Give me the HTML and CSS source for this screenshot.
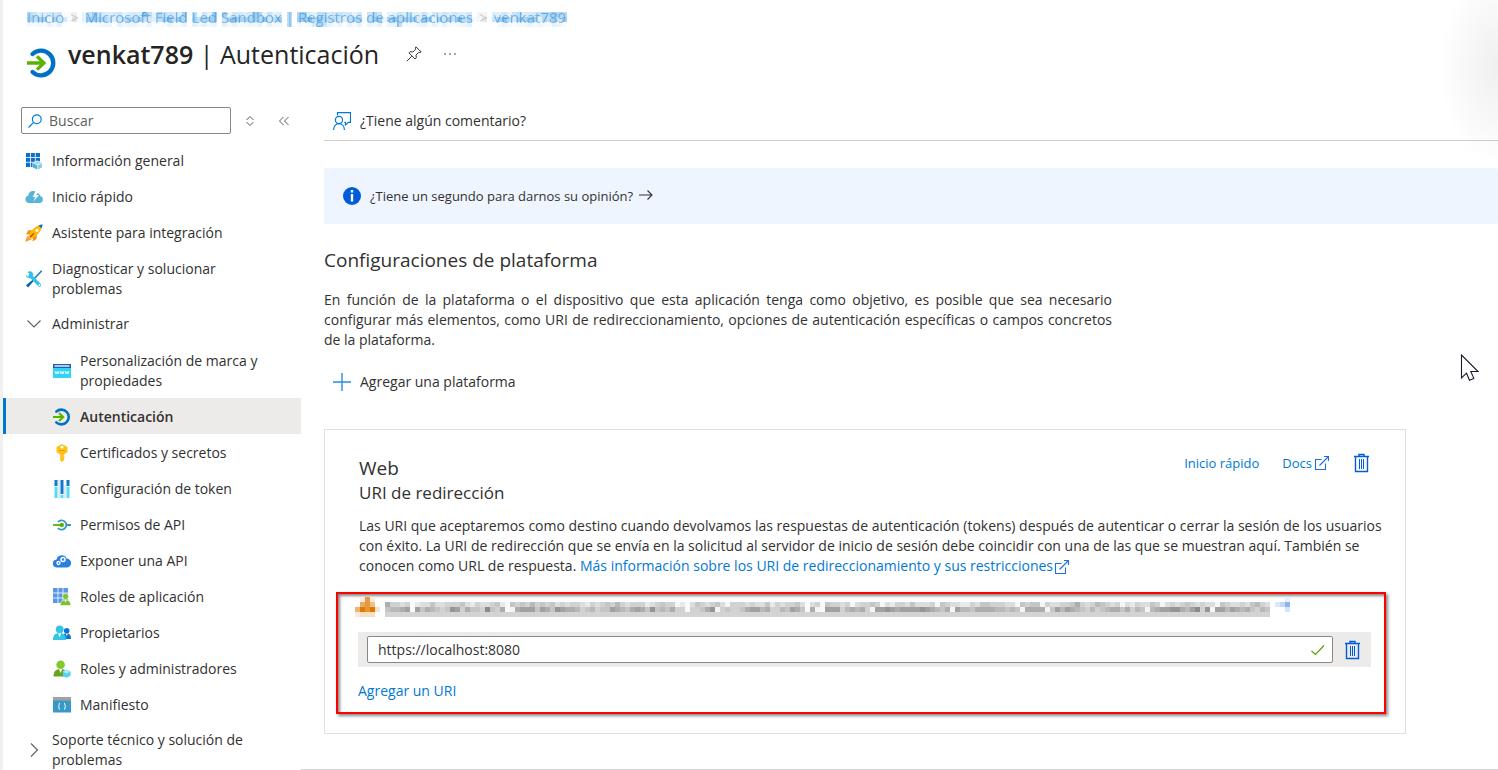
FILE: index.html
```html
<!DOCTYPE html>
<html lang="es">
<head><meta charset="utf-8"><title>venkat789 | Autenticación</title>
<link rel="stylesheet" href="styles.css">
</head>

<body>
<svg class="defs" aria-hidden="true">
 <defs>
  <!-- samples the blurred text once per 5px cell, then lays faint text over the cells -->
  <filter id="pixelate" x="0" y="0" width="100%" height="100%" color-interpolation-filters="sRGB">
   <feGaussianBlur in="SourceGraphic" stdDeviation="1.8" result="b"/>
   <feFlood x="2" y="2" width="1" height="1"/>
   <feComposite width="5" height="5"/>
   <feTile result="t"/>
   <feComposite in="b" in2="t" operator="in"/>
   <feMorphology operator="dilate" radius="2" result="m"/>
   <feGaussianBlur in="SourceGraphic" stdDeviation=".7"/>
   <feComponentTransfer result="s"><feFuncA type="linear" slope=".45"/></feComponentTransfer>
   <feMerge><feMergeNode in="m"/><feMergeNode in="s"/></feMerge>
  </filter>
  <symbol id="auth" viewBox="0 0 18 18">
   <path d="M3.3 3.6A7.4 7.4 0 1 1 3.3 14.4" fill="none" stroke="#0072c6" stroke-width="2.6" stroke-linecap="round"/>
   <path d="M0 9h9M6 5l4.2 4L6 13" fill="none" stroke="#59b400" stroke-width="2"/>
  </symbol>
  <symbol id="trash" viewBox="0 0 17 20">
   <path d="M1 3.500h15M6 3.500V1.500h5v2M2.500 3.500v15h12v-15" fill="none" stroke="#015cda" stroke-width="1.400"/>
   <path d="M6.500 6v10M8.500 6v10M10.500 6v10" stroke="#015cda"/>
  </symbol>
  <symbol id="ext" viewBox="0 0 16 16">
   <path d="M7.500 4.500H1.500v10h10V8.500M5.500 10.500 14.500 1.500M10 1.500h4.500V6" fill="none" stroke="#1b6fe0" stroke-width="1.100"/>
  </symbol>
 </defs>
</svg>

<div class="shell">
 <header>
  <nav class="crumbs" aria-label="Ruta">
   <a href="#">Inicio</a><span>&gt;</span><a href="#">Microsoft Field Led Sandbox | Registros de aplicaciones</a><span>&gt;</span><a href="#">venkat789</a>
  </nav>
  <div class="title">
   <svg class="logo"><use href="#auth"/></svg>
   <h1><b>venkat789</b> | Autenticación</h1>
   <button class="plain" aria-label="Anclar"><svg class="i16" viewBox="0 0 16 16"><path d="M10 .8l5.200 5.200-1.400 .5-1-.2-2.800 2.800.3 2.700-1.200 1.200L3 6.900l1.200-1.200 2.700.3 2.800-2.800-.2-1zM5.800 10.200.8 15.200" fill="none" stroke="#323130"/></svg></button>
   <button class="plain" aria-label="Más"><svg class="i16" viewBox="0 0 16 16"><g fill="#323130"><circle cx="3" cy="8" r=".8"/><circle cx="8" cy="8" r=".8"/><circle cx="13" cy="8" r=".8"/></g></svg></button>
  </div>
 </header>

 <div class="cols">
  <aside>
   <div class="search">
    <label class="box">
     <svg class="i16" viewBox="0 0 16 16"><path d="M1.500 14.500 6.400 9.600" stroke="#0078d4" stroke-width="1.200"/><circle cx="9.800" cy="6.200" r="4.400" fill="none" stroke="#0078d4" stroke-width="1.200"/></svg>
     <input type="text" placeholder="Buscar" aria-label="Buscar">
    </label>
    <button class="plain" aria-label="Ordenar"><svg class="i12" viewBox="0 0 12 12"><path d="M2.500 5 6 1.500 9.500 5M2.500 7 6 10.500 9.500 7" fill="none" stroke="#605e5c"/></svg></button>
    <button class="plain" aria-label="Contraer"><svg class="i12" viewBox="0 0 12 12"><path d="M5.500 2l-4 4 4 4M10.500 2l-4 4 4 4" fill="none" stroke="#605e5c"/></svg></button>
   </div>

   <nav class="menu" aria-label="Menú">
    <a href="#"><svg viewBox="0 0 18 18"><path d="M1 1h14v14H1z" fill="#0f6fc6"/><path d="M5.500 1v14M10.300 1v14M1 5.500h14M1 10.300h14" stroke="#fff" stroke-width=".8"/><path d="M12.500 8.500l5 2v5l-5 2.500-5-2.500v-5z" fill="#fff"/><path d="M12.500 9l4.500 1.800-4.500 2L8 10.800z" fill="#a7dcf0"/><path d="M8 11.300l4.200 2v4.200L8 15.500z" fill="#50b0d8"/><path d="M17 11.300l-4.200 2v4.200l4.200-2z" fill="#8acbe6"/></svg>Información general</a>
    <a href="#"><svg viewBox="0 0 18 18"><path d="M4 15a3.800 3.800 0 0 1-.6-7.500A5 5 0 0 1 12.600 5.300 4 4 0 0 1 15.500 8 3.600 3.600 0 0 1 14.500 15z" fill="#59b4d9"/><path d="M11 2 7.800 9h2.400L8.500 13.500 14 7h-2.700L14 2z" fill="#fff"/></svg>Inicio rápido</a>
    <a href="#"><svg viewBox="0 0 18 18"><path d="M7 6 3 6.500 1 10.500l4-.5zM12 11l-.5 4-4 2.500.5-4.500z" fill="#f78d1e"/><path d="M2.500 11.500 0 18l6.500-2.500z" fill="#ff9c2b"/><path d="M17.500.5C12 1 6.500 5 3.300 11.500l3.200 3.200C13 11.500 17 6 17.500.5z" fill="#ffb900"/><path d="M17.500.5c-1.500.1-2.600.4-4 1l3 3c.6-1.400.9-2.500 1-4z" fill="#0078d4"/><circle cx="12" cy="6.300" r="1.600" fill="#fff"/><path d="M5 13.300 9 9.200" stroke="#b4530a" stroke-width="1.300"/></svg>Asistente para integración</a>
    <a href="#"><svg viewBox="0 0 18 18"><path d="M16.700.8 8.500 9.500" stroke="#1380b8" stroke-width="1.500"/><path d="M9.300 8.500 1 15.200 3 17.400 10 9.500z" fill="#0062ad"/><path d="M5 5.500 14.500 15" stroke="#32c0ea" stroke-width="3.200" stroke-linecap="round"/><path d="M2.500 2l2.700 2.600-.6 1.700-1.800.4L.8 4.500C.8 7 2.600 8.700 5.200 8.300l3-2.700C8.700 3.200 7 1.200 4.400 1.200z" fill="#32c0ea"/><circle cx="14.500" cy="15" r=".9" fill="#fff"/></svg>Diagnosticar y solucionar problemas</a>
    <a href="#" class="group"><svg viewBox="0 0 18 18"><path d="M2.500 5.500 9 12l6.500-6.500" fill="none" stroke="#605e5c" stroke-width="1.100"/></svg>Administrar</a>
    <div class="sub">
     <a href="#"><svg viewBox="0 0 18 18"><path d="M0 2h18v14H0z" fill="#32d4f5"/><path d="M0 2h18v4H0z" fill="#1b62ab"/><path d="M1.500 3h15v2h-15z" fill="#a9c9e8"/><path d="M2 9l1 3 1-2.500L5 12l1-3M7 9l1 3 1-2.500 1 2.500 1-3M12 9l1 3 1-2.500 1 2.500 1-3" fill="none" stroke="#fff" stroke-width=".8"/></svg>Personalización de marca y propiedades</a>
     <a href="#" class="on"><svg><use href="#auth"/></svg>Autenticación</a>
     <a href="#"><svg viewBox="0 0 18 18"><path d="M9 0 14.500 3v5L10.700 10.800v1.400l1.300 1-1.300 1.300 1 1L9 18l-1.800-1.600V10.800L3.500 8V3z" fill="#ffc21a"/><circle cx="9" cy="3.200" r="1.400" fill="#fff"/><path d="M6 6.500h6" stroke="#ef9a00"/></svg>Certificados y secretos</a>
     <a href="#"><svg viewBox="0 0 18 18"><path d="M3 0v6M9 0v14M15 0v6" stroke="#0f78d4" stroke-width="3"/><path d="M3 7v11M15 7v11M9 15v3" stroke="#50dff5" stroke-width="3"/><path d="M6 0v18M12 5v13" stroke="#bfc6cc" stroke-width=".8"/></svg>Configuración de token</a>
     <a href="#"><svg viewBox="0 0 18 18"><path d="M5 6a4.700 4.700 0 1 1 0 6M13.500 9H18" fill="none" stroke="#3999c6" stroke-width="1.800"/><path d="M0 9h8" stroke="#59b400" stroke-width="1.800"/><circle cx="8.800" cy="9" r="2.200" fill="#59b400"/></svg>Permisos de API</a>
     <a href="#"><svg viewBox="0 0 18 18"><path d="M4 15.500a4 4 0 0 1-.4-8A5.300 5.300 0 0 1 13.700 6.500 4.500 4.500 0 0 1 13.500 15.500z" fill="#2a7fe0"/><circle cx="10" cy="7.500" r="2" fill="none" stroke="#fff" stroke-width="1.500"/><circle cx="5.500" cy="11" r="1.500" fill="none" stroke="#fff" stroke-width="1.300"/></svg>Exponer una API</a>
     <a href="#"><svg viewBox="0 0 18 18"><path d="M0 0h15v15H0z" fill="#5a96ee"/><path d="M5 0v15M10 0v15M0 5h15M0 10h15" stroke="#fff" stroke-width=".8"/><path d="M7.200 17.500c0-4 2-5.500 5.300-5.500s5.300 1.500 5.300 5.500z" fill="#7cc229" stroke="#fff" stroke-width=".6"/><circle cx="12.500" cy="8.500" r="3" fill="#7cc229" stroke="#fff" stroke-width=".6"/><path d="M11.500 12h2l-1 3z" fill="#fff"/></svg>Roles de aplicación</a>
     <a href="#"><svg viewBox="0 0 18 18"><path d="M9 15c0-4 1.500-5.500 4.500-5.500S18 11 18 15z" fill="#1173d0"/><circle cx="13.700" cy="6.700" r="2.800" fill="#1173d0"/><path d="M0 16c0-5 2-7 6.500-7s6.500 2 6.500 7z" fill="#32c5ea"/><circle cx="6.700" cy="5.300" r="3.900" fill="#32c5ea"/><path d="M5 9.300h3.200L6.600 13.500zM12.800 9.700h2l-1 2.600z" fill="#fff"/></svg>Propietarios</a>
     <a href="#"><svg viewBox="0 0 18 18"><path d="M.5 16.500C.5 11 3 9 7.500 9s7 2 7 7.500z" fill="#6aa31d"/><circle cx="7.600" cy="4.800" r="4.300" fill="#86c92e"/><path d="M5.900 9h3.400l-1.700 4z" fill="#fff"/><path d="M13.700 9.500l3.900 2v4.200l-3.900 2.100-3.900-2.100v-4.200z" fill="#50d5f0"/><path d="M13.700 9.500l3.900 2-3.900 2-3.900-2z" fill="#a9eefa"/></svg>Roles y administradores</a>
     <a href="#"><svg viewBox="0 0 18 18"><path d="M0 1h18v15.500H0z" fill="#3999c6"/><path d="M0 1h18v3.500H0z" fill="#a0a1a2"/><path d="M7 7c-1.500 0-.3 2.600-1.600 3.200C6.700 11 5.500 13.500 7 13.500M11 7c1.500 0 .3 2.600 1.600 3.200-1.300.8-.1 3.300-1.600 3.300" fill="none" stroke="#fff"/></svg>Manifiesto</a>
    </div>
    <a href="#"><svg viewBox="0 0 18 18"><path d="M6 2.500 12.500 9 6 15.500" fill="none" stroke="#605e5c" stroke-width="1.100"/></svg>Soporte técnico y solución de problemas</a>
   </nav>
  </aside>

  <main>
   <div class="bar">
    <button class="cmd"><svg class="i18" viewBox="0 0 18 18"><g fill="none" stroke="#0078d4" stroke-width="1.200"><path d="M4.500 3.500V.6h13v9.800h-2l-3 2.600v-2.600h-1.200"/><circle cx="6" cy="8" r="3.600"/><path d="M.6 18c0-4 2.400-6.300 5.400-6.300s5.400 2.300 5.400 6.300"/></g></svg>¿Tiene algún comentario?</button>
   </div>
   <a href="#" class="banner">
    <svg class="i18" viewBox="0 0 18 18"><circle cx="9" cy="9" r="9" fill="#015cda"/><path d="M9 3v2.400M9 7v7.500" stroke="#fff" stroke-width="2.400"/></svg>
    <span>¿Tiene un segundo para darnos su opinión?</span>
    <svg class="i14" viewBox="0 0 14 14"><path d="M0 6h13M8.500 1.500 13 6l-4.500 4.500" fill="none" stroke="#323130" stroke-width="1.100"/></svg>
   </a>
   <h2>Configuraciones de plataforma</h2>
   <p class="intro">En función de la plataforma o el dispositivo que esta aplicación tenga como objetivo, es posible que sea necesario configurar más elementos, como URI de redireccionamiento, opciones de autenticación específicas o campos concretos de la plataforma.</p>
   <button class="cmd add"><svg class="i18" viewBox="0 0 18 18"><path d="M9 0v18M0 9h18" stroke="#2b8fdc" stroke-width="1.400"/></svg>Agregar una plataforma</button>

   <section class="card">
    <div class="cardhead">
     <div>
      <h3>Web</h3>
      <h4>URI de redirección</h4>
     </div>
     <div class="acts">
      <a href="#">Inicio rápido</a>
      <a href="#">Docs <svg class="i16"><use href="#ext"/></svg></a>
      <button class="plain" aria-label="Eliminar"><svg class="bin"><use href="#trash"/></svg></button>
     </div>
    </div>
    <p>Las URI que aceptaremos como destino cuando devolvamos las respuestas de autenticación (tokens) después de autenticar o cerrar la sesión de los usuarios con éxito. La URI de redirección que se envía en la solicitud al servidor de inicio de sesión debe coincidir con una de las que se muestran aquí. También se conocen como URL de respuesta. <a href="#">Más información sobre los URI de redireccionamiento y sus restricciones<svg class="i16"><use href="#ext"/></svg></a></p>
    <div class="mark">
     <svg class="mosaic" id="mosaic" aria-hidden="true"></svg>
     <div class="uri">
      <div class="field">
       <input type="text" value="https://localhost:8080" aria-label="URI de redirección">
       <svg class="i16" viewBox="0 0 16 16"><path d="M1.500 9 5.500 12.500 14 3.500" fill="none" stroke="#57a300" stroke-width="1.200"/></svg>
      </div>
      <button class="plain" aria-label="Eliminar URI"><svg class="bin"><use href="#trash"/></svg></button>
     </div>
     <a href="#">Agregar un URI</a>
    </div>
   </section>
  </main>
 </div>
</div>
<div class="glow"></div>
<svg class="cursor" viewBox="0 0 20 28"><path d="M1.500 1v23l5-4.800 3 7 4.300-1.800-3-6.900h7.200z" fill="#fff" stroke="#1b1a29" stroke-width="1.100"/></svg>

<script src="mosaic.js"></script>
</body></html>
```
FILE: styles.css
```css
body{margin:0;overflow:hidden;background:#fff;color:#323130;font:14px/20px "Open Sans","Noto Sans",sans-serif}
h1,h2,h3,h4,p{margin:0;font-weight:400}
a{color:#0078d4;text-decoration:none}
button,input{font:inherit;color:inherit}
svg{flex:none}
.defs{position:absolute;width:0;height:0}
.plain{display:flex;padding:0;border:0;background:none}
.i12{width:12px;height:12px}
.i14{width:14px;height:14px}
.i16{width:16px;height:16px}
.i18{width:18px;height:18px}

.shell{display:flex;flex-direction:column;height:100vh;box-sizing:border-box;border-left:3px solid #f0f0f0}
header{flex:none;height:100px;box-sizing:border-box;padding:7px 0 0 24px}
.crumbs{display:flex;gap:6px;font-size:15px;filter:url(#pixelate)}
.crumbs span{color:#a0a0a0}
.title{display:flex;align-items:center;height:54px}
.title h1{margin:0 27px 0 11px;font-size:25px;line-height:36px;color:#252423}
.title b{font-weight:600}
.title .plain{margin-right:20px}
.logo{width:30px;height:30px;margin-top:18px}

.cols{display:flex;flex:1;min-height:0}
aside{flex:none;width:298px;overflow:hidden}
.search{display:flex;align-items:center;padding:7px 0 9px 18px}
.search .plain{margin-left:13px}
.search .plain + .plain{margin-left:22px}
.box{display:flex;align-items:center;width:210px;height:27px;box-sizing:border-box;padding-left:5px;border:1px solid #8a8886;border-radius:2px}
.box input{flex:1;min-width:0;border:0;outline:0;padding:0 6px;background:none}
.box input::placeholder{color:#605e5c;opacity:1}
.menu a{display:flex;align-items:center;gap:9px;padding:8px 40px 8px 22px;color:#323130}
.menu svg{width:18px;height:18px}
.menu a.group{padding-top:7px}
.menu .sub a{padding:9px 40px 7px 50px}
.menu .sub a.on{padding-left:47px;border-left:3px solid #0078d4;background:#edebe9;font-weight:600}

main{flex:1;min-width:0;padding-left:23px;border-bottom:1px solid #d6d6d6}
.bar{display:flex;height:40px;border-bottom:1px solid #d2d0ce}
.cmd{display:flex;align-items:center;gap:9px;padding:1px 9px 0;border:0;background:none}
.banner{display:flex;align-items:center;height:56px;margin:27px 0 24px;padding-left:19px;background:#eef5ff;border-radius:2px;color:#323130;font-size:13px}
.banner span{margin:0 6px 0 9px}
h2{font-size:19px;line-height:24px}
.intro{max-width:788px;margin:18px 0 20px;text-align:justify}
.add{height:24px;padding-top:0}
.card{max-width:1082px;box-sizing:border-box;margin-top:35px;padding:26px 34px 19px;border:1px solid #e1dfdd}
.cardhead{display:flex;justify-content:space-between;margin-bottom:11px}
h3{font-size:19px;line-height:24px}
h4{font-size:17px;line-height:25px}
.acts{display:flex;height:14px;align-items:center;gap:23px;margin-right:1px;font-size:13px}
.acts a{display:flex;align-items:center;gap:2px}
.bin{width:17px;height:20px}
.card p{margin-right:-20px}
.card p svg{vertical-align:-4px;margin-left:1px}
.mark{margin:16px -15px 0 -23px;padding:3px 13px 11px 20px;border:2px solid #f00;box-shadow:2px 2px 3px #888,inset 2px 2px 3px #888}
.mosaic{display:block;width:100%;height:20px;margin-left:-5px}
.uri{display:flex;align-items:center;margin:15px 0 14px;padding:4px 10px 4px 9px;background:#edebe9}
.field{display:flex;flex:1;align-items:center;height:27px;box-sizing:border-box;margin-right:11px;padding-right:6px;border:1px solid #8a8886;border-radius:2px;background:#fff}
.field input{flex:1;border:0;outline:0;padding:0 10px;background:none}

.glow{position:absolute;right:0;top:0;width:60px;height:168px;background:radial-gradient(ellipse at 100% 40%,#00000010,#00000000 70%);pointer-events:none}
.cursor{position:absolute;right:18px;top:354px;width:20px;height:28px;pointer-events:none}
```
FILE: mosaic.js
```js
// obscured notice: 5px cells, one digit per cell, 0 white .. 9 dark
var rows=[
 "633230122422333421322341043435343423233213234353233312343301224323420333232241323342023043323023343021332422230432211324433322043440322334632354323021322430232343232204322324532211643",
 "455670746543487364439436806777476487665345344765467648454633233468034334677563354764360777735656307787677778765460755466665545406666047576543534566463540567788657938077576564354535466"
]
var gaps=[5,24,60,84,87]
var warm=[[3,0,"#e39a4b"],[2,1,"#e8ab62"],[3,1,"#e39a3f"],[4,1,"#eec08a"],[2,0,"#fbeddd"],[4,0,"#fbeddd"],
 [1,2,"#eab676"],[2,2,"#e27a00"],[3,2,"#e79535"],[4,2,"#e07800"],[5,2,"#f8e3ca"],[1,3,"#fbeadb"],[2,3,"#f8dfc4"],[3,3,"#f8dfc4"],[4,3,"#f8dfc4"]]
var svg=document.getElementById("mosaic")

function cell(x,y,c){
 let r=document.createElementNS("http://www.w3.org/2000/svg","rect")
 r.setAttribute("x",5*x-3);r.setAttribute("y",5*y)
 r.setAttribute("width",5);r.setAttribute("height",5)
 r.setAttribute("fill",c);svg.appendChild(r)
}

warm.forEach(function(w){cell(w[0],w[1],w[2])})
for(let i=0;i<177;i++){
 rows.forEach(function(s,j){
  let g=gaps.includes(i)?250:245-12*s[i]
  cell(7+i,1+j,"rgb("+g+","+g+","+g+")")
 })
 cell(7+i,3,"#d3d3d1")
}
cell(185,1,"#dbe7fa");cell(186,1,"#c3d8f8");cell(187,1,"#8db4ee");cell(187,0,"#e6effc");cell(187,2,"#d5e4fa")
```
